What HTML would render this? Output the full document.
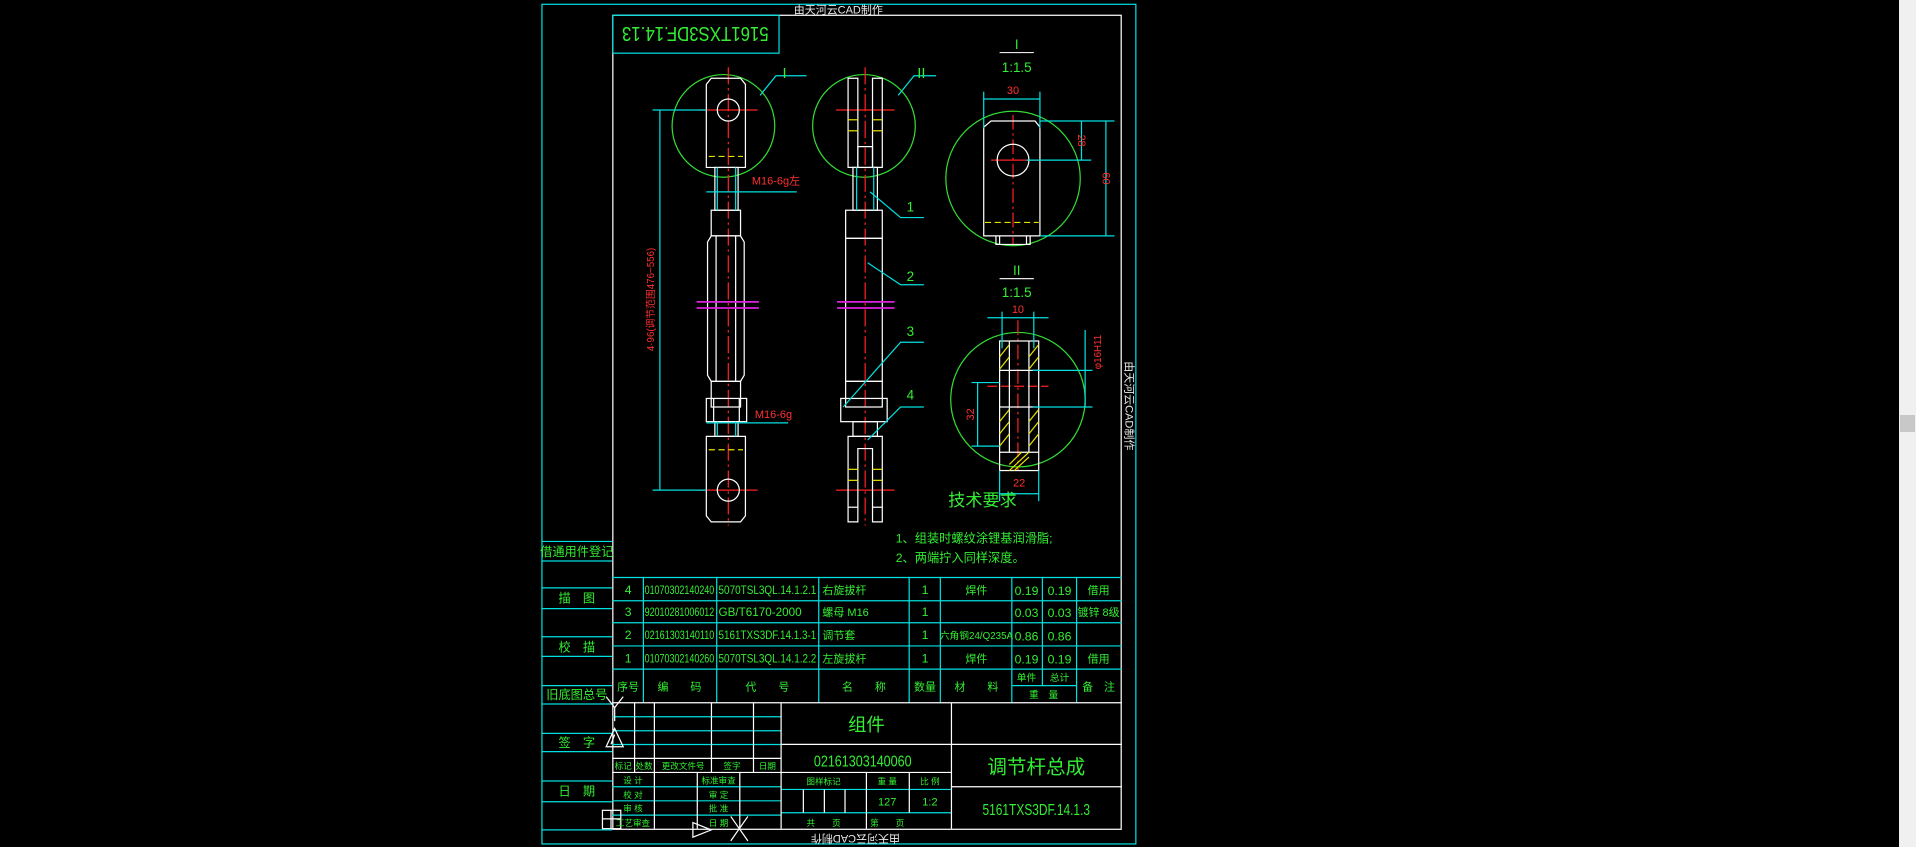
<!DOCTYPE html>
<html><head><meta charset="utf-8">
<style>
html,body{margin:0;padding:0;background:#000;width:1916px;height:847px;overflow:hidden}
svg{position:absolute;left:0;top:0}
#sb{position:absolute;left:1899px;top:0;width:17px;height:847px;background:#f0f0f0}
#th{position:absolute;left:1900px;top:415px;width:15px;height:17px;background:#c8c8c8}
text{font-family:"Liberation Sans","Noto Sans CJK SC",sans-serif}
</style></head><body>
<svg width="1899" height="847" viewBox="0 0 1554 693" preserveAspectRatio="none" xmlns="http://www.w3.org/2000/svg">
<rect width="1554" height="693" fill="#000"/>
<g fill="none" stroke-width="1">
<!-- borders -->
<rect x="443.5" y="3.5" width="486" height="687" stroke="#00e0e0"/>
<rect x="501.5" y="12.5" width="416" height="666" stroke="#fff"/>
<rect x="501.5" y="12.5" width="136" height="31" stroke="#00e0e0"/>
<!-- left column -->
<g stroke="#00e0e0">
<line x1="443" y1="443" x2="501" y2="443"/><line x1="443" y1="459" x2="501" y2="459"/>
<line x1="443" y1="481" x2="501" y2="481"/><line x1="443" y1="498" x2="501" y2="498"/>
<line x1="443" y1="521" x2="501" y2="521"/><line x1="443" y1="537" x2="501" y2="537"/>
<line x1="443" y1="561" x2="501" y2="561"/><line x1="443" y1="576" x2="501" y2="576"/>
<line x1="443" y1="600" x2="501" y2="600"/><line x1="443" y1="615" x2="501" y2="615"/>
<line x1="443" y1="639" x2="501" y2="639"/><line x1="443" y1="656" x2="501" y2="656"/>
<line x1="443" y1="679" x2="501" y2="679"/>
<!-- parts table -->
<line x1="501" y1="472.5" x2="918" y2="472.5"/><line x1="501" y1="491.5" x2="918" y2="491.5"/>
<line x1="501" y1="509.5" x2="918" y2="509.5"/><line x1="501" y1="528.5" x2="918" y2="528.5"/>
<line x1="501" y1="547.5" x2="918" y2="547.5"/><line x1="828" y1="561" x2="881" y2="561"/>
<line x1="526.5" y1="472" x2="526.5" y2="575"/><line x1="586.5" y1="472" x2="586.5" y2="575"/>
<line x1="670" y1="472" x2="670" y2="575"/><line x1="744" y1="472" x2="744" y2="575"/>
<line x1="769.5" y1="472" x2="769.5" y2="575"/><line x1="828" y1="472" x2="828" y2="575"/>
<line x1="853" y1="472" x2="853" y2="561"/><line x1="881" y1="472" x2="881" y2="575"/>
<!-- title left grid -->
<line x1="501" y1="586.4" x2="639" y2="586.4"/><line x1="501" y1="597.9" x2="639" y2="597.9"/>
<line x1="501" y1="609.1" x2="639" y2="609.1"/><line x1="501" y1="643.7" x2="639" y2="643.7"/>
<line x1="501" y1="655.2" x2="639" y2="655.2"/><line x1="501" y1="666.9" x2="639" y2="666.9"/>
<line x1="639" y1="645.9" x2="779" y2="645.9"/><line x1="639" y1="665" x2="779" y2="665"/>
</g>
<g stroke="#fff">
<line x1="501" y1="575" x2="918" y2="575"/>
<line x1="501" y1="620.5" x2="639" y2="620.5"/><line x1="501" y1="632" x2="779" y2="632"/>
<line x1="519.3" y1="575" x2="519.3" y2="632"/><line x1="535.5" y1="575" x2="535.5" y2="678"/>
<line x1="582.2" y1="575" x2="582.2" y2="632"/><line x1="616.6" y1="575" x2="616.6" y2="632"/>
<line x1="570.6" y1="632" x2="570.6" y2="678"/><line x1="605.4" y1="632" x2="605.4" y2="678"/>
<line x1="639.2" y1="575" x2="639.2" y2="678"/><line x1="778.6" y1="575" x2="778.6" y2="678"/>
<line x1="639" y1="609" x2="918" y2="609"/><line x1="778.6" y1="643.7" x2="918" y2="643.7"/>
<line x1="709" y1="632" x2="709" y2="678"/><line x1="744.1" y1="632" x2="744.1" y2="665"/>
<line x1="657.4" y1="646" x2="657.4" y2="665"/><line x1="674.6" y1="646" x2="674.6" y2="665"/><line x1="691.5" y1="646" x2="691.5" y2="665"/>
<!-- markers -->
<path d="M496 570 L503 579 L510 570 M503 579 L503 590"/>
<path d="M503 596 L496 611 L510 611 Z M503 601 L500 609"/>
<rect x="493" y="663" width="15" height="15"/><line x1="500" y1="663" x2="500" y2="678"/><line x1="493" y1="670" x2="508" y2="670"/>
<path d="M567 673 L582 679 L567 685 Z"/>
<path d="M598 668 L612 688 M612 668 L598 688"/>
</g>
<!-- circles -->
<g stroke="#33dd33">
<circle cx="592" cy="103" r="42"/><circle cx="707" cy="103" r="42"/>
<circle cx="829" cy="146" r="55"/><circle cx="833" cy="327" r="55"/>
</g>
<!-- center lines red -->
<g stroke="#ff2020">
<line x1="596" y1="55" x2="596" y2="430" stroke-dasharray="14 3 2 3"/>
<line x1="708" y1="55" x2="708" y2="430" stroke-dasharray="14 3 2 3"/>
<line x1="571" y1="90" x2="620" y2="90"/><line x1="571" y1="401" x2="620" y2="401"/>
<line x1="684" y1="90" x2="732" y2="90"/><line x1="684" y1="401" x2="732" y2="401"/>
<line x1="829" y1="94" x2="829" y2="200" stroke-dasharray="12 3 2 3"/>
<line x1="811" y1="131" x2="849" y2="131"/>
<line x1="833" y1="262" x2="833" y2="385" stroke-dasharray="12 3 2 3"/>
<line x1="808" y1="316" x2="858" y2="316" stroke-dasharray="8 3"/>
</g>
<!-- left rod white -->
<g stroke="#fff">
<path d="M582 64 L606 64 L610 69 L610 137 L578 137 L578 69 Z"/>
<circle cx="596" cy="90" r="9"/>
<rect x="585" y="137" width="19" height="35"/>
<rect x="582" y="172" width="24" height="21"/>
<path d="M582 193 L606 193 L609 198 L609 307 L606 312 L582 312 L579 307 L579 198 Z"/>
<line x1="586" y1="193" x2="586" y2="312"/><line x1="602" y1="193" x2="602" y2="312"/>
<rect x="582" y="312" width="24" height="21"/>
<rect x="578" y="326" width="33" height="19"/>
<line x1="584" y1="326" x2="584" y2="345"/><line x1="605" y1="326" x2="605" y2="345"/>
<rect x="585" y="345" width="19" height="12"/>
<path d="M578 357 L610 357 L610 422 L606 427 L582 427 L578 422 Z"/>
<circle cx="596" cy="401" r="9"/>
<!-- middle rod -->
<path d="M694 64 L702 64 L702 137 L694 137 Z M714 64 L722 64 L722 137 L714 137 Z"/>
<path d="M702 137 L702 120 L714 120 L714 137"/>
<line x1="694" y1="137" x2="722" y2="137"/>
<rect x="698" y="137" width="20" height="35"/>
<rect x="692" y="172" width="30" height="23"/>
<rect x="692" y="195" width="30" height="117"/>
<rect x="692" y="312" width="30" height="21"/>
<rect x="688" y="326" width="38" height="19"/>
<rect x="698" y="345" width="20" height="12"/>
<path d="M694 357 L722 357 L722 427 L714 427 L714 367 L702 367 L702 427 L694 427 Z"/>
<line x1="694" y1="415" x2="702" y2="415"/><line x1="714" y1="415" x2="722" y2="415"/>
<!-- detail I -->
<path d="M811 99 L847 99 L851 104 L851 193 L805 193 L805 104 Z"/>
<circle cx="829" cy="131" r="13"/>
<path d="M815 193 L815 200 L843 200 L843 193 M818 193 L818 200 M840 193 L840 200"/>
<!-- detail II -->
<rect x="818" y="279" width="32" height="106"/>
<line x1="826" y1="279" x2="826" y2="370"/><line x1="842" y1="279" x2="842" y2="370"/>
<line x1="818" y1="303" x2="850" y2="303"/><line x1="818" y1="333" x2="850" y2="333"/>
<line x1="818" y1="370" x2="850" y2="370"/>
</g>
<!-- yellow -->
<g stroke="#e8e000">
<line x1="580" y1="128" x2="608" y2="128" stroke-dasharray="5 3"/>
<line x1="580" y1="368" x2="608" y2="368" stroke-dasharray="5 3"/>
<line x1="694" y1="98" x2="702" y2="98"/><line x1="714" y1="98" x2="722" y2="98"/>
<line x1="694" y1="107" x2="702" y2="107"/><line x1="714" y1="107" x2="722" y2="107"/>
<line x1="694" y1="384" x2="702" y2="384"/><line x1="714" y1="384" x2="722" y2="384"/>
<line x1="694" y1="393" x2="702" y2="393"/><line x1="714" y1="393" x2="722" y2="393"/>
<line x1="806" y1="182" x2="850" y2="182" stroke-dasharray="5 3"/>
<path d="M818 292 L826 282 M818 302 L826 292 M842 292 L850 282 M842 302 L850 292 M818 345 L826 335 M818 355 L826 345 M818 365 L826 355 M842 345 L850 335 M842 355 L850 345 M842 365 L850 355 M826 385 L842 370 M830 385 L842 374 M826 380 L836 370"/>
</g>
<!-- magenta -->
<g stroke="#e020e0" stroke-width="1.5">
<line x1="570" y1="247" x2="621" y2="247"/><line x1="570" y1="252" x2="621" y2="252"/>
<line x1="685" y1="247" x2="732" y2="247"/><line x1="685" y1="252" x2="732" y2="252"/>
</g>
<!-- cyan dims/leaders -->
<g stroke="#00e0e0">
<line x1="540" y1="90" x2="540" y2="401"/><line x1="534" y1="90" x2="578" y2="90"/><line x1="534" y1="401" x2="578" y2="401"/>
<line x1="578" y1="157" x2="652" y2="157"/><line x1="578" y1="346" x2="645" y2="346"/>
<line x1="587" y1="137" x2="587" y2="172"/><line x1="602" y1="137" x2="602" y2="172"/>
<line x1="587" y1="345" x2="587" y2="357"/><line x1="602" y1="345" x2="602" y2="357"/>
<line x1="701" y1="137" x2="701" y2="172"/><line x1="715" y1="137" x2="715" y2="172"/>
<path d="M622 78 L635 62 L660 62"/><path d="M735 78 L748 62 L766 62"/>
<path d="M712 157 L737 178 L756 178"/><path d="M710 215 L737 233 L756 233"/>
<path d="M690 333 L737 280 L756 280"/><path d="M710 360 L737 333 L756 333"/>
<line x1="805" y1="75" x2="805" y2="105"/><line x1="851" y1="75" x2="851" y2="105"/>
<line x1="805" y1="81" x2="851" y2="81"/>
<line x1="851" y1="99" x2="912" y2="99"/><line x1="840" y1="131" x2="893" y2="131"/><line x1="851" y1="193" x2="912" y2="193"/>
<line x1="885" y1="99" x2="885" y2="131"/><line x1="905" y1="99" x2="905" y2="193"/>
<line x1="820" y1="255" x2="820" y2="285"/><line x1="846" y1="255" x2="846" y2="285"/>
<line x1="808" y1="260" x2="858" y2="260"/>
<line x1="845" y1="303" x2="894" y2="303"/><line x1="845" y1="333" x2="894" y2="333"/>
<line x1="888" y1="270" x2="888" y2="333"/>
<line x1="795" y1="313" x2="818" y2="313"/><line x1="795" y1="365" x2="818" y2="365"/>
<line x1="800" y1="313" x2="800" y2="365"/>
<line x1="818" y1="385" x2="818" y2="410"/><line x1="850" y1="385" x2="850" y2="410"/>
<line x1="818" y1="404" x2="850" y2="404"/>
</g>
<g stroke="#e8e8e8"><line x1="818" y1="43" x2="846" y2="43"/><line x1="818" y1="228" x2="846" y2="228"/></g>
</g>

<!-- texts -->
<g font-size="9" fill="#e8e8e8" text-anchor="middle">
<text x="686" y="11">由天河云CAD制作</text>
<text transform="translate(700,683) rotate(180)">由天河云CAD制作</text>
<text transform="translate(921,332) rotate(90)">由天河云CAD制作</text>
</g>
<g fill="#33ee33" text-anchor="middle">
<text transform="translate(569,22) rotate(180)" font-size="17" textLength="120" lengthAdjust="spacingAndGlyphs">5161TXS3DF.14.13</text>
<text x="642" y="64" font-size="12">I</text><text x="754" y="64" font-size="12">II</text>
<text x="832" y="40" font-size="11">I</text><text x="832" y="59" font-size="11">1:1.5</text>
<text x="832" y="225" font-size="11">II</text><text x="832" y="243" font-size="11">1:1.5</text>
<text x="745" y="173" font-size="11">1</text><text x="745" y="230" font-size="11">2</text>
<text x="745" y="275" font-size="11">3</text><text x="745" y="327" font-size="11">4</text>
<text x="804" y="414" font-size="14">技术要求</text>
<g font-size="10" text-anchor="start"><text x="733" y="444">1、组装时螺纹涂锂基润滑脂;</text><text x="733" y="460">2、两端拧入同样深度。</text></g>
<g font-size="10">
<text x="472" y="455">借通用件登记</text><text x="472" y="493">描　图</text><text x="472" y="533">校　描</text>
<text x="472" y="572">旧底图总号</text><text x="472" y="611">签　字</text><text x="472" y="651">日　期</text>
</g>
<g font-size="10">
<text x="514" y="486">4</text><text x="514" y="504">3</text><text x="514" y="523">2</text><text x="514" y="542">1</text>
<text x="556" y="486" textLength="57" lengthAdjust="spacingAndGlyphs">01070302140240</text>
<text x="556" y="504" textLength="57" lengthAdjust="spacingAndGlyphs">92010281006012</text>
<text x="556" y="523" textLength="57" lengthAdjust="spacingAndGlyphs">02161303140110</text>
<text x="556" y="542" textLength="57" lengthAdjust="spacingAndGlyphs">01070302140260</text>
<text x="628" y="486" textLength="80" lengthAdjust="spacingAndGlyphs">5070TSL3QL.14.1.2.1</text>
<text x="622" y="504" textLength="68" lengthAdjust="spacingAndGlyphs">GB/T6170-2000</text>
<text x="628" y="523" textLength="80" lengthAdjust="spacingAndGlyphs">5161TXS3DF.14.1.3-1</text>
<text x="628" y="542" textLength="80" lengthAdjust="spacingAndGlyphs">5070TSL3QL.14.1.2.2</text>
<g text-anchor="start" font-size="9"><text x="673" y="486">右旋拔杆</text><text x="673" y="504">螺母 M16</text><text x="673" y="523">调节套</text><text x="673" y="542">左旋拔杆</text></g>
<text x="757" y="486">1</text><text x="757" y="504">1</text><text x="757" y="523">1</text><text x="757" y="542">1</text>
<text x="799" y="486" font-size="9">焊件</text><text x="799" y="523" font-size="8">六角钢24/Q235A</text><text x="799" y="542" font-size="9">焊件</text>
<text x="840" y="487">0.19</text><text x="840" y="505">0.03</text><text x="840" y="524">0.86</text><text x="840" y="543">0.19</text>
<text x="867" y="487">0.19</text><text x="867" y="505">0.03</text><text x="867" y="524">0.86</text><text x="867" y="543">0.19</text>
<text x="899" y="486" font-size="9">借用</text><text x="899" y="504" font-size="9">镀锌 8级</text><text x="899" y="542" font-size="9">借用</text>
<g font-size="9"><text x="514" y="565">序号</text><text x="556" y="565">编　　码</text><text x="628" y="565">代　　号</text><text x="707" y="565">名　　称</text>
<text x="757" y="565">数量</text><text x="799" y="565">材　　料</text><text x="840" y="557" font-size="8">单件</text><text x="867" y="557" font-size="8">总计</text>
<text x="854" y="571" font-size="8">重　量</text><text x="899" y="565">备　注</text></g>
</g>
<g font-size="7">
<text x="510" y="629">标记</text><text x="527" y="629">处数</text><text x="559" y="629">更改文件号</text><text x="599" y="629">签字</text><text x="628" y="629">日期</text>
<text x="518" y="641">设 计</text><text x="518" y="653">校 对</text><text x="518" y="664">审 核</text><text x="518" y="676">工艺审查</text>
<text x="588" y="641">标准审查</text><text x="588" y="653">审 定</text><text x="588" y="664">批 准</text><text x="588" y="676">日 期</text>
<text x="674" y="642">图样标记</text><text x="726" y="642">重 量</text><text x="761" y="642">比 例</text>
<text x="674" y="676">共　　页</text><text x="726" y="676">第　　页</text>
</g>
<text x="726" y="659" font-size="9">127</text><text x="761" y="659" font-size="9">1:2</text>
<text x="709" y="598" font-size="15">组件</text>
<text x="706" y="627" font-size="13" textLength="80" lengthAdjust="spacingAndGlyphs">02161303140060</text>
<text x="848" y="633" font-size="16">调节杆总成</text>
<text x="848" y="667" font-size="13" textLength="88" lengthAdjust="spacingAndGlyphs">5161TXS3DF.14.1.3</text>
</g>
<g fill="#ff3030" text-anchor="middle" font-size="9">
<text x="635" y="151">M16-6g左</text><text x="633" y="342">M16-6g</text>
<text transform="translate(535,245) rotate(-90)" font-size="8">4·96(调节范围476~556)</text>
<text x="829" y="77">30</text>
<text transform="translate(882,115) rotate(90)">28</text>
<text transform="translate(902,146) rotate(90)">60</text>
<text x="833" y="256">10</text>
<text transform="translate(901,288) rotate(-90)" font-size="8">φ16H11</text>
<text transform="translate(797,339) rotate(-90)">32</text>
<text x="834" y="398">22</text>
</g>
</svg>
<div id="sb"></div><div id="th"></div>
</body></html>
